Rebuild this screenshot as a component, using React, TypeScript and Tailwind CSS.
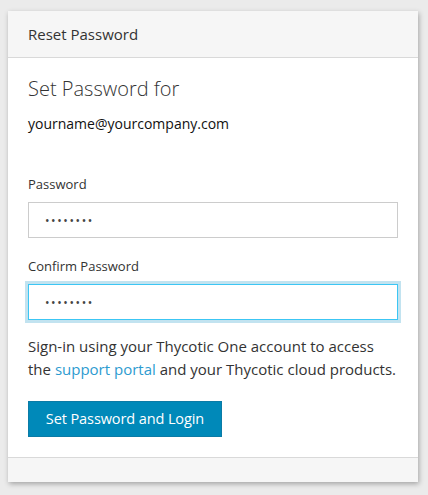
import React from 'react';

const App: React.FC = () => {
  return (
    <div className="min-h-[495px] w-[428px] bg-[#ebebeb] pt-[11px] pl-[8px] font-['Open_Sans',sans-serif]">
      <div className="w-[410px] bg-white shadow-[1px_2px_5px_rgba(0,0,0,0.3)]">
        {/* Header */}
        <div className="h-[47px] bg-[#f6f6f6] border-b border-[#d9d9d9] px-[20px] flex items-center">
          <span className="text-[15px] text-[#333]">Reset Password</span>
        </div>

        {/* Body */}
        <div className="px-[20px] pt-[17px] pb-[20px] border-b border-[#d9d9d9]">
          <div className="text-[20px] leading-[28px] font-light text-[#333]">Set Password for</div>
          <div className="mt-[11px] text-[14px] leading-[20px] text-[#111]">yourname@yourcompany.com</div>

          <div className="mt-[41px] text-[13px] leading-[18px] text-[#333]">Password</div>
          <input
            type="password"
            readOnly
            defaultValue="password"
            className="mt-[9px] block w-full h-[36px] border border-[#cccccc] px-[16px] text-[12px] tracking-[1.6px] text-[#444] outline-none"
          />

          <div className="mt-[19px] text-[13px] leading-[18px] text-[#333]">Confirm Password</div>
          <input
            type="password"
            readOnly
            defaultValue="password"
            className="mt-[9px] block w-full h-[36px] border border-[#3cc6f4] shadow-[0_0_0_3px_#c2e3f0] px-[16px] text-[12px] tracking-[1.6px] text-[#444] outline-none"
          />

          <p className="mt-[15px] text-[15px] leading-[23px] text-[#333]">
            Sign-in using your Thycotic One account to access the{' '}
            <a href="#" className="text-[#2d9bd0]">support portal</a> and your Thycotic cloud products.
          </p>

          <button className="mt-[20px] h-[36px] w-[194px] bg-[#0089b9] border border-[#0b7ba6] text-white text-[14.5px] tracking-[-0.1px]">
            Set Password and Login
          </button>
        </div>

        {/* Footer */}
        <div className="h-[24px] bg-[#f6f6f6]" />
      </div>
    </div>
  );
};

export default App;
